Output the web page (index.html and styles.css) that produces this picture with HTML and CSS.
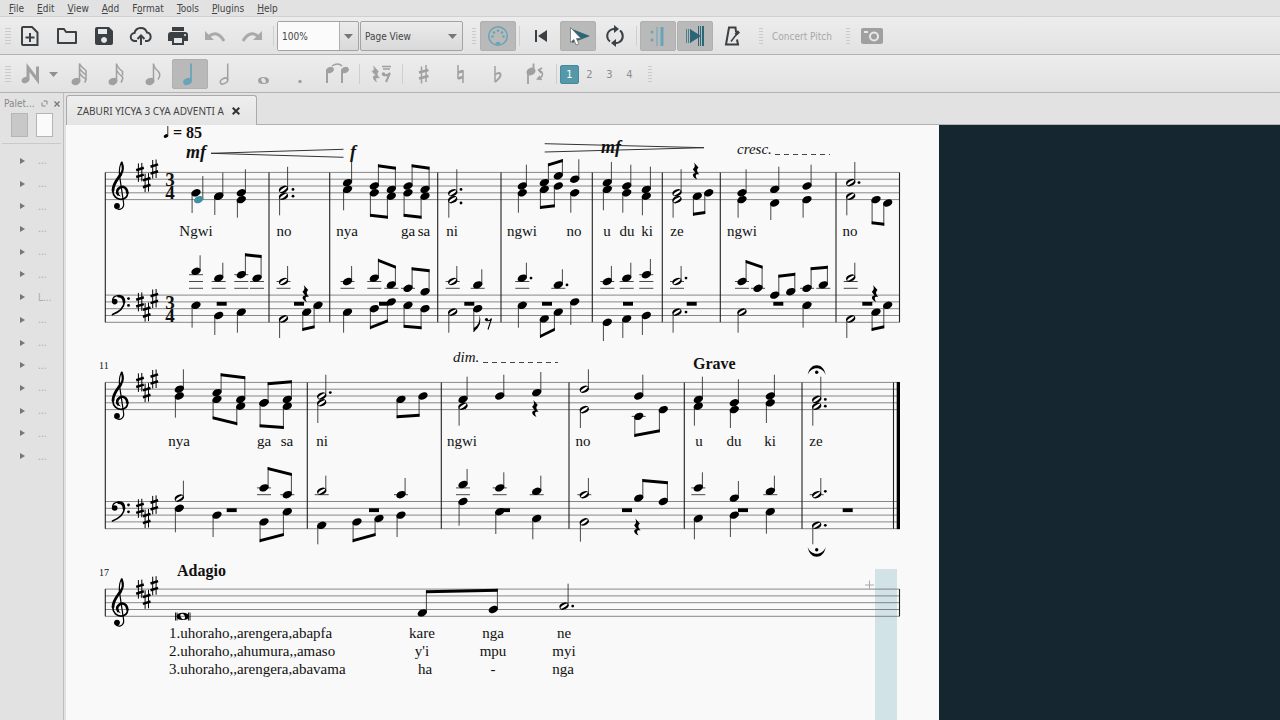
FILE: index.html
```html
<!DOCTYPE html>
<html lang="en">
<head>
    <meta charset="UTF-8">
    <meta name="viewport" content="width=device-width, initial-scale=1.0">
    <title>ZABURI YICYA 3 CYA ADVENTI A</title>
    <link rel="stylesheet" href="styles.css">
</head>
<body>
    <nav class="menu-bar">
        <button><u>F</u>ile</button>
        <button><u>E</u>dit</button>
        <button><u>V</u>iew</button>
        <button><u>A</u>dd</button>
        <button>F<u>o</u>rmat</button>
        <button><u>T</u>ools</button>
        <button><u>P</u>lugins</button>
        <button><u>H</u>elp</button>
    </nav>

    <!-- File and playback toolbar -->
    <div class="toolbar">
        <span class="handle"></span>
        <button class="tool" aria-label="New">
            <svg width="24" height="24" viewBox="0 0 24 24" fill="none" stroke="#3b4045" stroke-width="2"><path d="M5 3h9l5.500 5.500V21H5q-1 0-1-1V4q0-1 1-1z"/><path d="M12 9v9M7.500 13.500h9"/></svg>
        </button>
        <button class="tool" aria-label="Open">
            <svg width="24" height="24" viewBox="0 0 24 24" fill="none" stroke="#3b4045" stroke-width="2"><path d="M3 5h6l2 3h10v11H3z" stroke-linejoin="round"/></svg>
        </button>
        <button class="tool" aria-label="Save">
            <svg width="24" height="24" viewBox="0 0 24 24"><path fill="#3b4045" fill-rule="evenodd" d="M5 3h12l4 4v12q0 2-2 2H5q-2 0-2-2V5q0-2 2-2zm1 2v5h9V5zm6 8a3 3 0 1 0 .1 0z"/></svg>
        </button>
        <button class="tool" aria-label="Save online">
            <svg width="24" height="24" viewBox="0 0 24 24" fill="none" stroke="#3b4045" stroke-width="2"><path d="M8 17H6a4 4 0 0 1-.5-8A6.500 6.500 0 0 1 18 8.500a4.300 4.300 0 0 1 0 8.500h-2"/><path d="M12 21v-9M8.500 15l3.500-3.500 3.500 3.500"/></svg>
        </button>
        <button class="tool" aria-label="Print">
            <svg width="24" height="24" viewBox="0 0 24 24"><path fill="#3b4045" fill-rule="evenodd" d="M6 3h12v4H6zM5 8h14q3 0 3 3v6h-4v4H6v-4H2v-6q0-3 3-3zm3 6v5h8v-5zm11-4a1 1 0 1 0 .1 0z"/></svg>
        </button>
        <button class="tool" aria-label="Undo">
            <svg width="24" height="24" viewBox="0 0 24 24" fill="none" stroke="#a9a9a9" stroke-width="3"><path d="M5 13q9-8 16 4"/><path fill="#a9a9a9" stroke="none" d="M2 7v9h9z"/></svg>
        </button>
        <button class="tool" aria-label="Redo">
            <svg width="24" height="24" viewBox="0 0 24 24" fill="none" stroke="#a9a9a9" stroke-width="3"><path d="M19 13q-9-8-16 4"/><path fill="#a9a9a9" stroke="none" d="M22 7v9h-9z"/></svg>
        </button>
        <span class="separator"></span>
        <span class="combo zoom-combo">
            <select aria-label="Zoom"><option>100%</option></select>
            <svg width="9" height="5" viewBox="0 0 9 5"><path fill="#777" d="M0 0h9L4.500 5z"/></svg>
        </span>
        <span class="combo view-combo">
            <select aria-label="View mode"><option>Page View</option></select>
            <svg width="9" height="5" viewBox="0 0 9 5"><path fill="#777" d="M0 0h9L4.500 5z"/></svg>
        </span>
        <span class="handle spaced"></span>
        <button class="tool active" aria-label="MIDI input">
            <svg width="24" height="24" viewBox="0 0 24 24"><circle cx="12" cy="12" r="9.300" fill="none" stroke="#68a5b8" stroke-width="1.500"/><g fill="#68a5b8"><circle cx="6.500" cy="12.500" r="1.300"/><circle cx="8" cy="8.500" r="1.300"/><circle cx="12" cy="6.800" r="1.300"/><circle cx="16" cy="8.500" r="1.300"/><circle cx="17.500" cy="12.500" r="1.300"/><path d="M9.500 21v-2q2.500-2.500 5 0v2z"/></g></svg>
        </button>
        <span class="separator"></span>
        <button class="tool" aria-label="Rewind">
            <svg width="24" height="24" viewBox="0 0 24 24" fill="#3b4045"><path d="M6 6h2v12H6zM18 6v12l-9-6z"/></svg>
        </button>
        <button class="tool active" aria-label="Play">
            <svg width="24" height="24" viewBox="0 0 24 24"><path fill="#2b6578" d="M6 5v14l18-7z"/><path fill="#fff" stroke="#666" stroke-width=".7" d="M4.500 3.500v15l3.300-3 2.300 5.500 2.700-1.200-2.300-5.300h4.500z"/></svg>
        </button>
        <button class="tool" aria-label="Loop">
            <svg width="24" height="24" viewBox="0 0 24 24" fill="none" stroke="#3b4045" stroke-width="2"><path d="M7 17.500A7 7 0 0 1 7.500 6Q9.500 4.800 12 5M17 6.500a7 7 0 0 1-.5 11.500q-2 1.200-4.500 1"/><path fill="#3b4045" stroke="none" d="M11 1l5 4-5 4zM13 15l-5 4 5 4z"/></svg>
        </button>
        <span class="separator"></span>
        <button class="tool active" aria-label="Play repeats">
            <svg width="24" height="24" viewBox="0 0 24 24" fill="#68a5b8"><circle cx="6" cy="8" r="1.500"/><circle cx="6" cy="16" r="1.500"/><path d="M10.500 3h1v19h-1zM14.500 3h3v19h-3z"/></svg>
        </button>
        <button class="tool active" aria-label="Pan score">
            <svg width="24" height="24" viewBox="0 0 24 24"><path stroke="#4b7f90" d="M3.500 5v14M5.500 5v14M7.500 5v14"/><path fill="#2b6578" d="M7 5v14l11-7z"/><path fill="#2b6578" d="M15 2h1v20h-1zM17 2h1v20h-1zM19 2h2v20h-2z"/></svg>
        </button>
        <button class="tool" aria-label="Metronome">
            <svg width="24" height="24" viewBox="0 0 24 24" fill="none" stroke="#3b4045" stroke-width="2"><path d="M16 8l-.5-4.500H9L6 20.500h12l-1-5"/><path d="M11 17.500L17.500 9" stroke-width="1.500"/><path stroke-width="3" d="M15.500 10.500l3.500-3"/></svg>
        </button>
        <span class="handle spaced"></span>
        <button class="text-tool">Concert Pitch</button>
        <span class="handle spaced"></span>
        <button class="tool" aria-label="Image capture">
            <svg width="24" height="24" viewBox="0 0 24 24"><path fill="#a0a0a0" fill-rule="evenodd" d="M3 4h18q2 0 2 2v12q0 2-2 2H3q-2 0-2-2V6q0-2 2-2zm11 3.500a5 5 0 1 0 .1 0zM4 7v2h4V7z"/><circle cx="14" cy="12.500" r="3" fill="#a0a0a0"/></svg>
        </button>
    </div>

    <!-- Note input toolbar -->
    <div class="toolbar">
        <span class="handle"></span>
        <button class="tool wide" aria-label="Note input">
            <svg width="24" height="24" viewBox="0 0 24 24"><ellipse cx="6.500" cy="18" rx="4" ry="3" transform="rotate(-25 6.500 18)" fill="#a0a0a0"/><path fill="none" stroke="#a0a0a0" stroke-width="3" d="M9 17.500V5.500L18.500 18V4.500"/></svg>
            <svg width="9" height="5" viewBox="0 0 9 5"><path fill="#909090" d="M0 0h9L4.500 5z"/></svg>
        </button>
        <button class="tool" aria-label="32nd note">
            <svg width="24" height="24" viewBox="0 0 24 24" fill="none" stroke="#a0a0a0" stroke-width="1.500"><ellipse cx="9" cy="19.500" rx="3.800" ry="2.700" transform="rotate(-25 9 19.500)" fill="#a0a0a0"/><path d="M12.500 19V1.500q1 3 6.500 7v4M12.500 6q1 3 6.500 7v4M12.500 10.500q1 3 6.500 7-.5 2-1.500 3"/></svg>
        </button>
        <button class="tool" aria-label="16th note">
            <svg width="24" height="24" viewBox="0 0 24 24" fill="none" stroke="#a0a0a0" stroke-width="1.500"><ellipse cx="9" cy="19.500" rx="3.800" ry="2.700" transform="rotate(-25 9 19.500)" fill="#a0a0a0"/><path d="M12.500 19V1.500q.5 3.500 6 8v4M12.500 7q.5 3.500 6 8 .8 2-1.500 5.500"/></svg>
        </button>
        <button class="tool" aria-label="Eighth note">
            <svg width="24" height="24" viewBox="0 0 24 24" fill="none" stroke="#a0a0a0" stroke-width="1.500"><ellipse cx="9" cy="19.500" rx="3.800" ry="2.700" transform="rotate(-25 9 19.500)" fill="#a0a0a0"/><path d="M12.500 19V1.500q.5 4.500 4.500 7.500 3.500 4 0 8.500"/></svg>
        </button>
        <button class="tool active" aria-label="Quarter note">
            <svg width="24" height="24" viewBox="0 0 24 24" fill="none" stroke="#68a5b8" stroke-width="1.800"><ellipse cx="9.500" cy="19.500" rx="3.600" ry="2.500" transform="rotate(-25 9.500 19.500)" fill="#68a5b8"/><path d="M13 19V1.500"/></svg>
        </button>
        <button class="tool" aria-label="Half note">
            <svg width="24" height="24" viewBox="0 0 24 24" fill="none" stroke="#a0a0a0" stroke-width="1.500"><ellipse cx="9" cy="19" rx="4" ry="2.500" transform="rotate(-30 9 19)"/><path d="M12.700 18V1.500"/></svg>
        </button>
        <button class="tool" aria-label="Whole note">
            <svg width="24" height="24" viewBox="0 0 24 24"><path fill="#a0a0a0" fill-rule="evenodd" d="M11.500 15q5.500 0 5.500 3.500T11.500 22 6 18.500 11.500 15zm-1 1q-2 .5-1 3t3 2q2-.5 1-3t-3-2z"/></svg>
        </button>
        <button class="tool" aria-label="Augmentation dot">
            <svg width="24" height="24" viewBox="0 0 24 24"><circle cx="11" cy="19.500" r="1.700" fill="#a0a0a0"/></svg>
        </button>
        <button class="tool" aria-label="Tie">
            <svg width="24" height="24" viewBox="0 0 24 24" fill="none" stroke="#a0a0a0" stroke-width="2"><path d="M1 21V8M16 21V8"/><path d="M6 4q6-4 10 0" stroke-width="1.500"/><g fill="#a0a0a0" stroke="none"><ellipse cx="4" cy="8" rx="4" ry="3" transform="rotate(-25 4 8)"/><ellipse cx="19" cy="8" rx="4" ry="3" transform="rotate(-25 19 8)"/></g></svg>
        </button>
        <span class="separator"></span>
        <button class="tool" aria-label="Rest">
            <svg width="24" height="24" viewBox="0 0 24 24" fill="none" stroke="#a0a0a0" stroke-width="2"><path d="M4.500 4l5 5.500q-3 2.500 1 6.500-5.500-1-3 4-4.500-3-3-6l2.500-.5-4-4q3.500-2 1.500-5.500z" fill="#a0a0a0" stroke-width=".5"/><path d="M13 4.500h9M14 7h7" stroke-width="1.500"/><circle cx="14.500" cy="12" r="1.800" fill="#a0a0a0" stroke="none"/><path d="M14 13q5 1 7-2l-4 9"/></svg>
        </button>
        <span class="separator"></span>
        <button class="tool" aria-label="Sharp">
            <svg width="24" height="24" viewBox="0 0 24 24" fill="none" stroke="#a0a0a0"><path stroke-width="1.500" d="M9.500 4.500v17M14 3v17"/><path stroke-width="2.500" d="M7 10.500l9.500-2.500M7 16.500l9.500-2.500"/></svg>
        </button>
        <button class="tool" aria-label="Natural">
            <svg width="24" height="24" viewBox="0 0 24 24" fill="none" stroke="#a0a0a0"><path stroke-width="1.500" d="M9 3v14M14 8v13"/><path stroke-width="2.500" d="M9 10.500l5-1.500M9 16.500l5-1.500"/></svg>
        </button>
        <button class="tool" aria-label="Flat">
            <svg width="24" height="24" viewBox="0 0 24 24" fill="none" stroke="#a0a0a0"><path stroke-width="1.500" d="M9 4v16"/><path stroke-width="2" d="M9 12.500q5-3 5.500 0t-5.500 7.500"/></svg>
        </button>
        <button class="tool" aria-label="Flip direction">
            <svg width="24" height="24" viewBox="0 0 24 24" fill="none" stroke="#a0a0a0" stroke-width="1.800"><path d="M5 22V10M10.500 8V1.500"/><ellipse cx="8" cy="9.500" rx="3.800" ry="2.800" transform="rotate(-25 8 9.500)" fill="#a0a0a0"/><path d="M16 8q7 4 0 9" stroke-width="1.500"/><path d="M19 6l-3.500 2 2.500 3M17 14l-2.500 3 4.500.5" stroke-width="1.500"/></svg>
        </button>
        <span class="separator"></span>
        <button class="voice selected">1</button>
        <button class="voice">2</button>
        <button class="voice">3</button>
        <button class="voice">4</button>
        <span class="handle spaced"></span>
    </div>

    <div class="workspace">
        <aside class="palettes">
            <div class="palettes-title">
                <h2>Palet...</h2>
                <button aria-label="Undock"><svg width="7" height="7" viewBox="0 0 7 7" fill="none" stroke="#888"><path d="M2.500 1h3.500v3.500M4.500 6H1V2.500"/></svg></button>
                <button aria-label="Close palettes"><svg width="6" height="6" viewBox="0 0 6 6" fill="none" stroke="#777" stroke-width="1.400"><path d="M.5.500l5 5M5.500.500l-5 5"/></svg></button>
            </div>
            <div class="palette-tools">
                <button aria-label="Add palette"></button>
                <input type="text" aria-label="Search palettes">
            </div>
            <ul class="palette-list">
                <li><button>...</button></li>
                <li><button>...</button></li>
                <li><button>...</button></li>
                <li><button>...</button></li>
                <li><button>...</button></li>
                <li><button>...</button></li>
                <li><button>L...</button></li>
                <li><button>...</button></li>
                <li><button>...</button></li>
                <li><button>...</button></li>
                <li><button>...</button></li>
                <li><button>...</button></li>
                <li><button>...</button></li>
                <li><button>...</button></li>
            </ul>
        </aside>

        <main class="editor">
            <div class="tabs">
                <div class="tab">
                    <span>ZABURI YICYA 3 CYA ADVENTI A</span>
                    <button aria-label="Close score"><svg width="8" height="8" viewBox="0 0 8 8" fill="none" stroke="#333" stroke-width="2"><path d="M.7.700l6.600 6.600M7.300.700L.7 7.300"/></svg></button>
                </div>
            </div>
            <div class="canvas">
                <div class="page">
                    <svg id="score" width="873" height="595" viewBox="66 125 873 595">
                        <defs>
                            <ellipse id="head" rx="4.900" ry="3.400" transform="rotate(-25)"/>
                            <g id="half">
                                <ellipse rx="4.800" ry="3.300" transform="rotate(-25)"/>
                                <ellipse rx="4.100" ry="1.200" transform="rotate(-35)" fill="#f9f9f9"/>
                            </g>
                            <g id="sharp">
                                <path d="M-1.600-9V9.500M1.800-9.500V9" fill="none" stroke="#000" stroke-width="1"/>
                                <path d="M-3.800-2.200l7.600-2.400M-3.800 4.600L3.800 2.200" fill="none" stroke="#000" stroke-width="2.500"/>
                            </g>
                            <!-- clefs are drawn from the top line of the staff -->
                            <g id="treble" fill="none" stroke="#000" stroke-linecap="round">
                                <circle cx="117" cy="33.500" r="2.900" fill="#000" stroke="none"/>
                                <path stroke-width="1.200" d="M115 34.500Q116.500 37.600 120.500 36.800 124.500 35 123.500 30L119.500 3Q118.700-6 121.800-10.300"/>
                                <path stroke-width="2.200" d="M121.800-9.500Q124.300-3 120.800 2"/>
                                <path stroke-width="2.800" d="M120.800 2C117 7.500 113 11 113 18"/>
                                <path stroke-width="1.600" d="M112.700 18C113 24 117 27 121 27Q127.500 26.500 127.700 20.500"/>
                                <path stroke-width="2.500" d="M127.400 20.500C127 15 123 13.500 120 15Q115.500 18 118 22"/>
                                <path stroke-width="1" d="M118 22l2 1.500"/>
                            </g>
                            <g id="bass" fill="none" stroke="#000" stroke-linecap="round">
                                <circle cx="114.700" cy="6.500" r="2.800" fill="#000" stroke="none"/>
                                <path stroke-width="1.300" d="M112.500 6Q112.500.8 118.500.6"/>
                                <path stroke-width="2.800" d="M118.500 1Q124 1 124 7"/>
                                <path stroke-width="1.600" d="M124.300 7C124 13 118.500 17 112.500 19.500"/>
                                <circle cx="128.500" cy="3.500" r="1.400" fill="#000" stroke="none"/>
                                <circle cx="128.500" cy="10.300" r="1.400" fill="#000" stroke="none"/>
                            </g>
                            <path id="quarter-rest" d="M-2-8.500L2.500-3.500C.5-1.500.5 0 3.300 3.500 0 2.500-1.500 4 1.200 8.500-4.500 6-4 2-.5 2L-3.200-1.800C-.8-3.500-.8-5.500-2-8.500z"/>
                            <g id="fermata">
                                <path d="M-9 5C-7-8 7-8 9 5 6-4-6-4-9 5z"/>
                                <circle cy="2.300" r="1.700"/>
                            </g>
                        </defs>
                        <rect class="range" x="875" y="569" width="22" height="151"/>
                        <g id="music"></g>

                        <!-- tempo, dynamics and lines -->
                        <g class="marks">
                            <use href="#head" transform="translate(166 136) scale(.5)"/>
                            <path d="M167.800 135.500V126"/>
                            <path d="M343.500 149.300L211 153.300l132.500 4M544.700 143.700L704 147.700l-159.300 4.300"/>
                            <path class="dashes" d="M775 154.500h55M483 362.500h75"/>
                            <path class="cursor" d="M865 585h9M869.500 580.500v9"/>
                        </g>
                        <use href="#fermata" transform="translate(816.700 370)"/>
                        <use href="#fermata" transform="translate(816.700 552) scale(1 -1)"/>
                        <g class="bold">
                            <text x="173" y="138">= 85</text>
                            <text x="693" y="369">Grave</text>
                            <text x="177" y="576">Adagio</text>
                        </g>
                        <g class="dynamic">
                            <text x="186" y="158">mf</text>
                            <text x="350" y="158">f</text>
                            <text x="601" y="153">mf</text>
                        </g>
                        <g class="expression">
                            <text x="737" y="154">cresc.</text>
                            <text x="453" y="362">dim.</text>
                        </g>
                        <g class="number">
                            <text x="99" y="369">11</text>
                            <text x="99" y="576">17</text>
                        </g>
                        <g class="time">
                            <text x="170" y="186">3<tspan x="170" y="199">4</tspan></text>
                            <text x="170" y="309">3<tspan x="170" y="322">4</tspan></text>
                        </g>

                        <g class="lyrics">
                            <text x="196" y="236">Ngwi</text>
                            <text x="284" y="236">no</text>
                            <text x="347" y="236">nya</text>
                            <text x="408" y="236">ga</text>
                            <text x="424" y="236">sa</text>
                            <text x="452" y="236">ni</text>
                            <text x="522" y="236">ngwi</text>
                            <text x="574" y="236">no</text>
                            <text x="607" y="236">u</text>
                            <text x="627" y="236">du</text>
                            <text x="647" y="236">ki</text>
                            <text x="677" y="236">ze</text>
                            <text x="742" y="236">ngwi</text>
                            <text x="850" y="236">no</text>
                            <text x="179" y="446">nya</text>
                            <text x="264" y="446">ga</text>
                            <text x="287" y="446">sa</text>
                            <text x="322" y="446">ni</text>
                            <text x="462" y="446">ngwi</text>
                            <text x="583" y="446">no</text>
                            <text x="699" y="446">u</text>
                            <text x="734" y="446">du</text>
                            <text x="770" y="446">ki</text>
                            <text x="816" y="446">ze</text>
                            <text x="422" y="638">kare</text>
                            <text x="493" y="638">nga</text>
                            <text x="564" y="638">ne</text>
                            <text x="422" y="656">y'i</text>
                            <text x="493" y="656">mpu</text>
                            <text x="564" y="656">myi</text>
                            <text x="425" y="674">ha</text>
                            <text x="493" y="674">-</text>
                            <text x="563" y="674">nga</text>
                            <g class="verse">
                                <text x="169" y="638">1.uhoraho,,arengera,abapfa</text>
                                <text x="169" y="656">2.uhoraho,,ahumura,,amaso</text>
                                <text x="169" y="674">3.uhoraho,,arengera,abavama</text>
                            </g>
                        </g>
                    </svg>
                </div>
            </div>
        </main>
    </div>
    <script src="score.js"></script>
</body>
</html>
```
FILE: styles.css
```css
* {
    margin: 0;
    padding: 0;
    box-sizing: border-box;
}

body {
    height: 100vh;
    display: flex;
    flex-direction: column;
    overflow: hidden;
    background: #e2e2e2;
    color: #444;
    font-family: "DejaVu Sans Condensed", "Noto Sans", sans-serif;
    font-size: 10px;
}

button, select, input {
    font: inherit;
    color: inherit;
    border: none;
    background: none;
}

/* Menu */
.menu-bar {
    display: flex;
    height: 17px;
    padding-left: 3px;
    border-bottom: 1px solid #d0d0d0;
}

.menu-bar button {
    padding: 1px 7px 0 6px;
}

.menu-bar u {
    text-underline-offset: 1px;
}

/* Toolbars */
.toolbar {
    display: flex;
    align-items: center;
    gap: 1px;
    height: 38px;
    padding: 1px 0 0 5px;
    background: linear-gradient(#ededed, #e2e2e2);
    border-bottom: 1px solid #b2b2b2;
}

.handle {
    width: 6px;
    height: 18px;
    background: radial-gradient(circle, #cacaca 1px, transparent 1px) 0 0 / 2px 3px;
}

.handle.spaced {
    width: 4px;
    margin: 0 3px 0 8px;
}

.tool {
    width: 36px;
    height: 30px;
    display: flex;
    align-items: center;
    justify-content: center;
    border-radius: 2px;
}

.tool svg {
    overflow: visible;
}

.tool.wide {
    width: 48px;
    gap: 6px;
    padding-left: 4px;
}

.tool.active {
    background: #b9b9b9;
    border: 1px solid #b0b0b0;
}

.separator {
    width: 1px;
    height: 20px;
    margin: 0 2px;
    background: #cfcfcf;
}

.text-tool {
    padding: 0 5px;
    color: #a8a8a8;
}

.combo {
    display: grid;
    align-items: center;
    height: 30px;
    border: 1px solid #a3a3a3;
    border-radius: 2px;
    background: linear-gradient(#ebebeb, #d9d9d9);
}

.combo select,
.combo svg {
    grid-area: 1 / 1;
}

.combo svg {
    justify-self: end;
    margin-right: 5px;
    pointer-events: none;
}

.combo select {
    appearance: none;
    height: 28px;
    padding-left: 4px;
}

.zoom-combo {
    width: 82px;
}

.zoom-combo select {
    margin-right: 18px;
    background: #fbfbfb;
    border-right: 1px solid #b0b0b0;
}

.view-combo {
    width: 103px;
}

.voice {
    width: 19px;
    height: 19px;
    border-radius: 2px;
    color: #8c8c8c;
    font-size: 11px;
}

.voice.selected {
    background: #5498aa;
    border: 1px solid #45899b;
    color: white;
}

/* Palettes */
.workspace {
    flex: 1;
    display: flex;
    min-height: 0;
}

.palettes {
    width: 64px;
    border-right: 1px solid #bebebe;
    color: #888;
}

.palettes-title {
    display: flex;
    align-items: center;
    gap: 6px;
    height: 20px;
    padding: 1px 4px 0;
    padding-right: 7px;
}

.palettes-title h2 {
    flex: 1;
    font-size: 10px;
    font-weight: normal;
}

.palettes-title button {
    display: flex;
}

.palette-tools {
    display: flex;
    gap: 8px;
    height: 31px;
    margin: 0 2px;
    padding-left: 9px;
    border-bottom: 1px solid #c9c9c9;
}

.palette-tools button,
.palette-tools input {
    width: 17px;
    height: 24px;
    background: #c8c8c8;
    border: 1px solid #b5b5b5;
}

.palette-tools input {
    background: #fafafa;
}

.palette-list {
    display: grid;
    grid-auto-rows: 1fr;
    height: 318px;
    margin-top: 5px;
    list-style: none;
}

.palette-list li {
    display: flex;
}

.palette-list button {
    display: flex;
    align-items: center;
    gap: 13px;
    padding: 1px 0 0 20px;
    color: #aaa;
}

.palette-list button::before {
    content: "";
    border: 3px solid transparent;
    border-left: 5px solid #777;
    border-right: none;
}

/* Score tabs */
.editor {
    flex: 1;
    display: flex;
    flex-direction: column;
    min-width: 0;
    padding-left: 2px;
}

.tabs {
    display: flex;
    height: 32px;
    padding-top: 2px;
    border-bottom: 1px solid #b2b2b2;
}

.tab {
    display: flex;
    align-items: center;
    gap: 8px;
    height: 30px;
    padding: 0 16px 0 10px;
    border: 1px solid #aaa;
    border-bottom: none;
    border-radius: 3px 3px 0 0;
    background: linear-gradient(#eee, #e4e4e4);
    font-family: "Noto Sans", sans-serif;
}

.tab button {
    display: flex;
}

/* Score */
.canvas {
    flex: 1;
    display: flex;
    min-height: 0;
    overflow: hidden;
    background: #152631;
}

.page {
    background: #f9f9f9;
}

.page svg {
    display: block;
}

.range {
    fill: #d1e3e7;
}

.staff-line {
    stroke: #6a6a6a;
    stroke-width: 0.8;
}

.bar-line {
    stroke: #222;
    stroke-width: 1.1;
}

.stem,
.ledger {
    stroke: #333;
    stroke-width: 0.9;
}

.selected-note {
    fill: #3f8fa5;
}

.marks path {
    fill: none;
    stroke: #333;
}

.marks .dashes {
    stroke: #444;
    stroke-dasharray: 5 4;
}

.marks .cursor {
    stroke: #aaa;
}

.page text {
    font-family: "Liberation Serif", serif;
    font-size: 15px;
    fill: #111;
}

.page .bold text {
    font-size: 16px;
    font-weight: bold;
}

.page .dynamic text {
    font-size: 18px;
    font-weight: bold;
    font-style: italic;
}

.page .expression text {
    font-style: italic;
}

.page .number text {
    font-size: 10px;
}

.page .time text {
    font-size: 19px;
    font-weight: bold;
    text-anchor: middle;
}

.lyrics text {
    text-anchor: middle;
}

.lyrics .verse text {
    text-anchor: start;
}
```
FILE: score.js
```js
const SVG_NS = "http://www.w3.org/2000/svg";
const music = document.getElementById("music");
const STEP = 3.4; // half a staff space

// notes: [x, step below the top line, stem end y, type]
// beams: [x1, y1, x2, y2, 1 for stems up or -1 for stems down]
const systems = [
    {
        bars: [269, 329.7, 437.7, 501, 592.3, 662.3, 720.3, 836, 899.5],
        staves: [
            {
                top: 172.4, clef: "treble",
                notes: [
                    [196, 6, 213], [198.7, 8, 176, "selected"], [218.7, 7, 172.5], [218.7, 7, 215],
                    [241.3, 6, 169.3], [241.3, 8, 217.7],
                    [283.5, 5, 166.8, "half"], [283.5, 7, 215.3, "half"],
                    [347.5, 3, 162], [347.5, 5, 210.3],
                    [374.3, 4, 164.3], [374.3, 6, 216.7], [391.3, 5, 166.7], [391.3, 7, 218.7],
                    [408, 4, 164.3], [408, 6, 216.7], [425, 5, 166.7], [425, 7, 218.7],
                    [452.7, 6, 169.3, "half"], [452.7, 8, 217.7, "half"],
                    [522.3, 4, 164.7], [522.3, 6, 212.7], [544.3, 3, 163.5], [544.3, 5, 209],
                    [558.3, 1, 159], [558.3, 4, 207.3], [574.7, 2, 159.3], [574.7, 6, 212.7],
                    [607.3, 3, 162], [607.3, 5, 210.3], [626.7, 4, 164.7], [626.7, 6, 212.7],
                    [646.3, 5, 166.7], [646.3, 7, 215.3],
                    [677, 6, 169.3, "half"], [677, 8, 217.7, "half"], [697.3, 7, 215.7], [708.7, 6, 214],
                    [742, 6, 169.3], [742, 8, 217.7], [774.7, 5, 166.7], [774.7, 9, 220],
                    [807, 4, 164.7], [807, 8, 217.7],
                    [850.7, 3, 162, "half"], [850.7, 7, 215.3, "half"], [876, 8, 224.3], [887.7, 9, 225.7]
                ],
                beams: [
                    [374.3, 164.3, 391.3, 166.7, 1], [374.3, 216.7, 391.3, 218.7, -1],
                    [408, 164.3, 425, 166.7, 1], [408, 216.7, 425, 218.7, -1],
                    [544.3, 163.5, 558.3, 159, 1], [544.3, 209, 558.3, 207.3, -1],
                    [697.3, 215.7, 708.7, 214, -1], [876, 224.3, 887.7, 225.7, -1]
                ],
                dots: [[293, 5], [293, 7], [461, 5], [461, 9], [859, 3]],
                quarterRests: [[696, 171]],
                wholeRests: []
            },
            {
                top: 295.1, clef: "bass",
                notes: [
                    [196, -7, 255.3], [196, 3, 327.7], [218.7, -5, 262.7], [218.7, 6, 335],
                    [241.3, -6, 253.3], [241.3, 5, 332.7], [257, -5, 255],
                    [283.5, -4, 266, "half"], [283.5, 7, 338, "half"], [306.7, 5, 331], [318, 3, 328.3],
                    [347.5, -4, 266], [347.5, 5, 332.7], [374.3, -5, 258.7], [374.3, 4, 329.3],
                    [391.3, -3, 265.7], [391.3, 2, 322.3], [408, -2, 267.3], [408, 3, 327.7],
                    [425, -1, 269.3], [425, 4, 329.3],
                    [452.7, -4, 266, "half"], [452.7, 5, 332.7, "half"], [477.7, -3, 269.3], [477.7, 4, 332],
                    [522.3, -5, 262.7], [522.3, 3, 327.7], [544.3, 7, 338], [558.3, -3, 269.3],
                    [558.3, 5, 330.7], [574.7, 2, 325],
                    [607.3, -4, 266], [607.3, 8, 341], [626.7, -5, 262.7], [626.7, 7, 338],
                    [646.3, -6, 259], [646.3, 6, 335],
                    [677, -4, 266, "half"], [677, 5, 332.7, "half"],
                    [742, -4, 260], [742, 5, 332.7, "half"], [758, -2, 265.7], [774.7, 0, 274.7],
                    [790.7, -1, 272.7], [807, -2, 267.3], [807, 3, 327.7], [823.3, -3, 265.7],
                    [850.7, -5, 262.7, "half"], [850.7, 7, 338, "half"], [876, 5, 331], [887.7, 3, 328.3]
                ],
                beams: [
                    [241.3, 253.3, 257, 255, 1], [306.7, 331, 318, 328.3, -1],
                    [374.3, 258.7, 391.3, 265.7, 1], [374.3, 329.3, 391.3, 322.3, -1],
                    [408, 267.3, 425, 269.3, 1], [408, 327.7, 425, 329.3, -1],
                    [544.3, 338, 558.3, 330.7, -1],
                    [742, 260, 758, 265.7, 1], [774.7, 274.7, 790.7, 272.7, 1],
                    [807, 267.3, 823.3, 265.7, 1], [876, 331, 887.7, 328.3, -1]
                ],
                dots: [[531, -5], [567, -3], [686, -5], [686, 5]],
                quarterRests: [[305.7, 293.5], [875, 293.5]],
                wholeRests: [221.7, 299, 384, 469.3, 547, 628, 691.7, 778.3, 867.3]
            }
        ]
    },
    {
        bars: [307.3, 441.3, 569, 684.3, 802, 893.5],
        end: true,
        staves: [
            {
                top: 382.4, clef: "treble",
                notes: [
                    [179.3, 2, 369.3], [179.3, 4, 417.7], [217, 3, 373.3], [217, 5, 419.3],
                    [240.7, 5, 376.3], [240.7, 7, 425.3], [264, 6, 382.3], [264, 6, 427.3],
                    [287.3, 5, 380.3], [287.3, 7, 429],
                    [321.7, 4, 374.7, "half"], [321.7, 6, 423, "half"], [401, 5, 418.3], [423, 4, 416.7],
                    [463, 7, 425.7, "half"], [463, 5, 376.7], [499.7, 4, 374.7], [536.7, 3, 372],
                    [584.3, 2, 369.3, "half"], [584.3, 8, 428, "half"], [638.7, 4, 374.7],
                    [638.7, 10, 437], [663.3, 8, 432.3],
                    [698.3, 5, 376.7], [698.3, 7, 425.7], [734.3, 6, 379.3], [734.3, 8, 428],
                    [770.3, 4, 374.7], [770.3, 6, 423],
                    [816.7, 5, 376.7, "half"], [816.7, 7, 425.7, "half"]
                ],
                beams: [
                    [217, 373.3, 240.7, 376.3, 1], [217, 419.3, 240.7, 425.3, -1],
                    [264, 382.3, 287.3, 380.3, 1], [264, 427.3, 287.3, 429, -1],
                    [401, 418.3, 423, 416.7, -1], [638.7, 437, 663.3, 432.3, -1]
                ],
                dots: [[330.3, 3], [825.3, 5], [825.3, 7]],
                quarterRests: [[535.3, 408.5]],
                wholeRests: []
            },
            {
                top: 501.5, clef: "bass",
                notes: [
                    [179.3, -1, 480.7, "half"], [179.3, 2, 532.3], [217, 4, 537],
                    [264, -4, 467], [264, 6, 542.3], [287.3, -2, 473], [287.3, 3, 536],
                    [321.7, -3, 475.7, "half"], [321.7, 7, 544.3], [357, 6, 542.3], [379, 5, 536],
                    [401, -2, 478], [401, 4, 537],
                    [463, -5, 469], [463, 0, 525.7], [499.7, -4, 472.3], [499.7, 3, 534],
                    [536.7, -3, 475.7], [536.7, 5, 539.3],
                    [584.3, -2, 478, "half"], [584.3, 6, 541.7, "half"], [638.7, -1, 479], [663.3, 0, 481.3],
                    [698.3, -4, 472.3], [698.3, 5, 539.3], [734.3, -1, 481], [734.3, 4, 537],
                    [770.3, -3, 475.7], [770.3, 3, 533.7],
                    [816.7, -2, 478, "half"], [816.7, 7, 544.3, "half"]
                ],
                beams: [
                    [264, 467, 287.3, 473, 1], [264, 542.3, 287.3, 536, -1],
                    [357, 542.3, 379, 536, -1], [638.7, 479, 663.3, 481.3, 1]
                ],
                dots: [[825.3, -3], [825.3, 7]],
                quarterRests: [[637.3, 527]],
                wholeRests: [231.7, 374, 505, 627, 743, 847.7]
            }
        ]
    },
    {
        bars: [899.5],
        staves: [
            {
                top: 589.1, clef: "treble",
                notes: [[422.3, 7, 590.3], [493.3, 6, 588.7], [564, 5, 583.7, "half"]],
                beams: [[422.3, 590.3, 493.3, 588.7, 1]],
                dots: [[572.7, 5]],
                quarterRests: [],
                wholeRests: []
            }
        ]
    }
];

function add(name, attributes) {
    const element = document.createElementNS(SVG_NS, name);
    for (const key in attributes) {
        element.setAttribute(key, attributes[key]);
    }
    music.appendChild(element);
}

function line(x1, y1, x2, y2, className) {
    add("line", { x1, y1, x2, y2, class: className });
}

function symbol(id, x, y) {
    add("use", { href: "#" + id, transform: `translate(${x} ${y})` });
}

function stemX(x, up) {
    return up ? x + 4.1 : x - 3.9;
}

function drawNote(top, [x, step, stemEnd, type]) {
    const y = top + step * STEP;
    for (let s = -2; s >= step; s -= 2) {
        line(x - 7, top + s * STEP, x + 7, top + s * STEP, "ledger");
    }
    for (let s = 10; s <= step; s += 2) {
        line(x - 7, top + s * STEP, x + 7, top + s * STEP, "ledger");
    }
    const sx = stemX(x, stemEnd < y);
    line(sx, y, sx, stemEnd, "stem");
    add("use", {
        href: type === "half" ? "#half" : "#head",
        transform: `translate(${x} ${y})`,
        class: type === "selected" ? "selected-note" : "note"
    });
}

function drawStaff(staff) {
    const top = staff.top;
    for (let i = 0; i < 5; i++) {
        line(105, top + i * 2 * STEP, 899.5, top + i * 2 * STEP, "staff-line");
    }
    symbol(staff.clef, 0, top);
    const shift = staff.clef === "bass" ? 2 : 0;
    symbol("sharp", 140, top + shift * STEP);
    symbol("sharp", 146.7, top + (shift + 3) * STEP);
    symbol("sharp", 154.3, top + (shift - 1) * STEP);

    staff.notes.forEach(note => drawNote(top, note));
    staff.beams.forEach(([x1, y1, x2, y2, dir]) => {
        const a = stemX(x1, dir > 0) - 0.4;
        const b = stemX(x2, dir > 0) + 0.4;
        const h = 3 * dir;
        add("polygon", { points: `${a},${y1} ${b},${y2} ${b},${y2 + h} ${a},${y1 + h}` });
    });
    staff.dots.forEach(([x, step]) => add("circle", { cx: x, cy: top + step * STEP, r: 1.4 }));
    staff.quarterRests.forEach(([x, y]) => symbol("quarter-rest", x, y));
    staff.wholeRests.forEach(x => add("rect", { x: x - 5, y: top + 6.8, width: 10, height: 3.8 }));
}

systems.forEach(system => {
    const first = system.staves[0].top;
    const last = system.staves[system.staves.length - 1].top + 8 * STEP;
    system.staves.forEach(drawStaff);
    [105.3, ...system.bars].forEach(x => line(x, first, x, last, "bar-line"));
    if (system.end) {
        add("rect", { x: 896.7, y: first - 0.4, width: 3.3, height: last - first + 0.8 });
    }
});

// flag and eighth rest in the fourth bar
add("path", { d: "M473.8 332v-4q7-4 5.500-13 4 9-5.500 17z" });
add("circle", { cx: 486.5, cy: 319.5, r: 1.6 });
add("path", { d: "M486 320.500q4 1 5.500-2l-3.500 11", fill: "none", stroke: "#000", "stroke-width": 1.1 });

// breve on the bottom line
add("path", { d: "M175.500 612.500v8M177 612.500v8M188.500 612.500v8M190 612.500v8", stroke: "#000", "stroke-width": 0.9 });
add("path", { d: "M182.700 612.800q6 0 6 3.600t-6 3.600-6-3.600 6-3.600zm-1 1q-2.200.6-1 3.200t3 2.200q2.200-.6 1-3.200t-3-2.200z", "fill-rule": "evenodd" });
```
